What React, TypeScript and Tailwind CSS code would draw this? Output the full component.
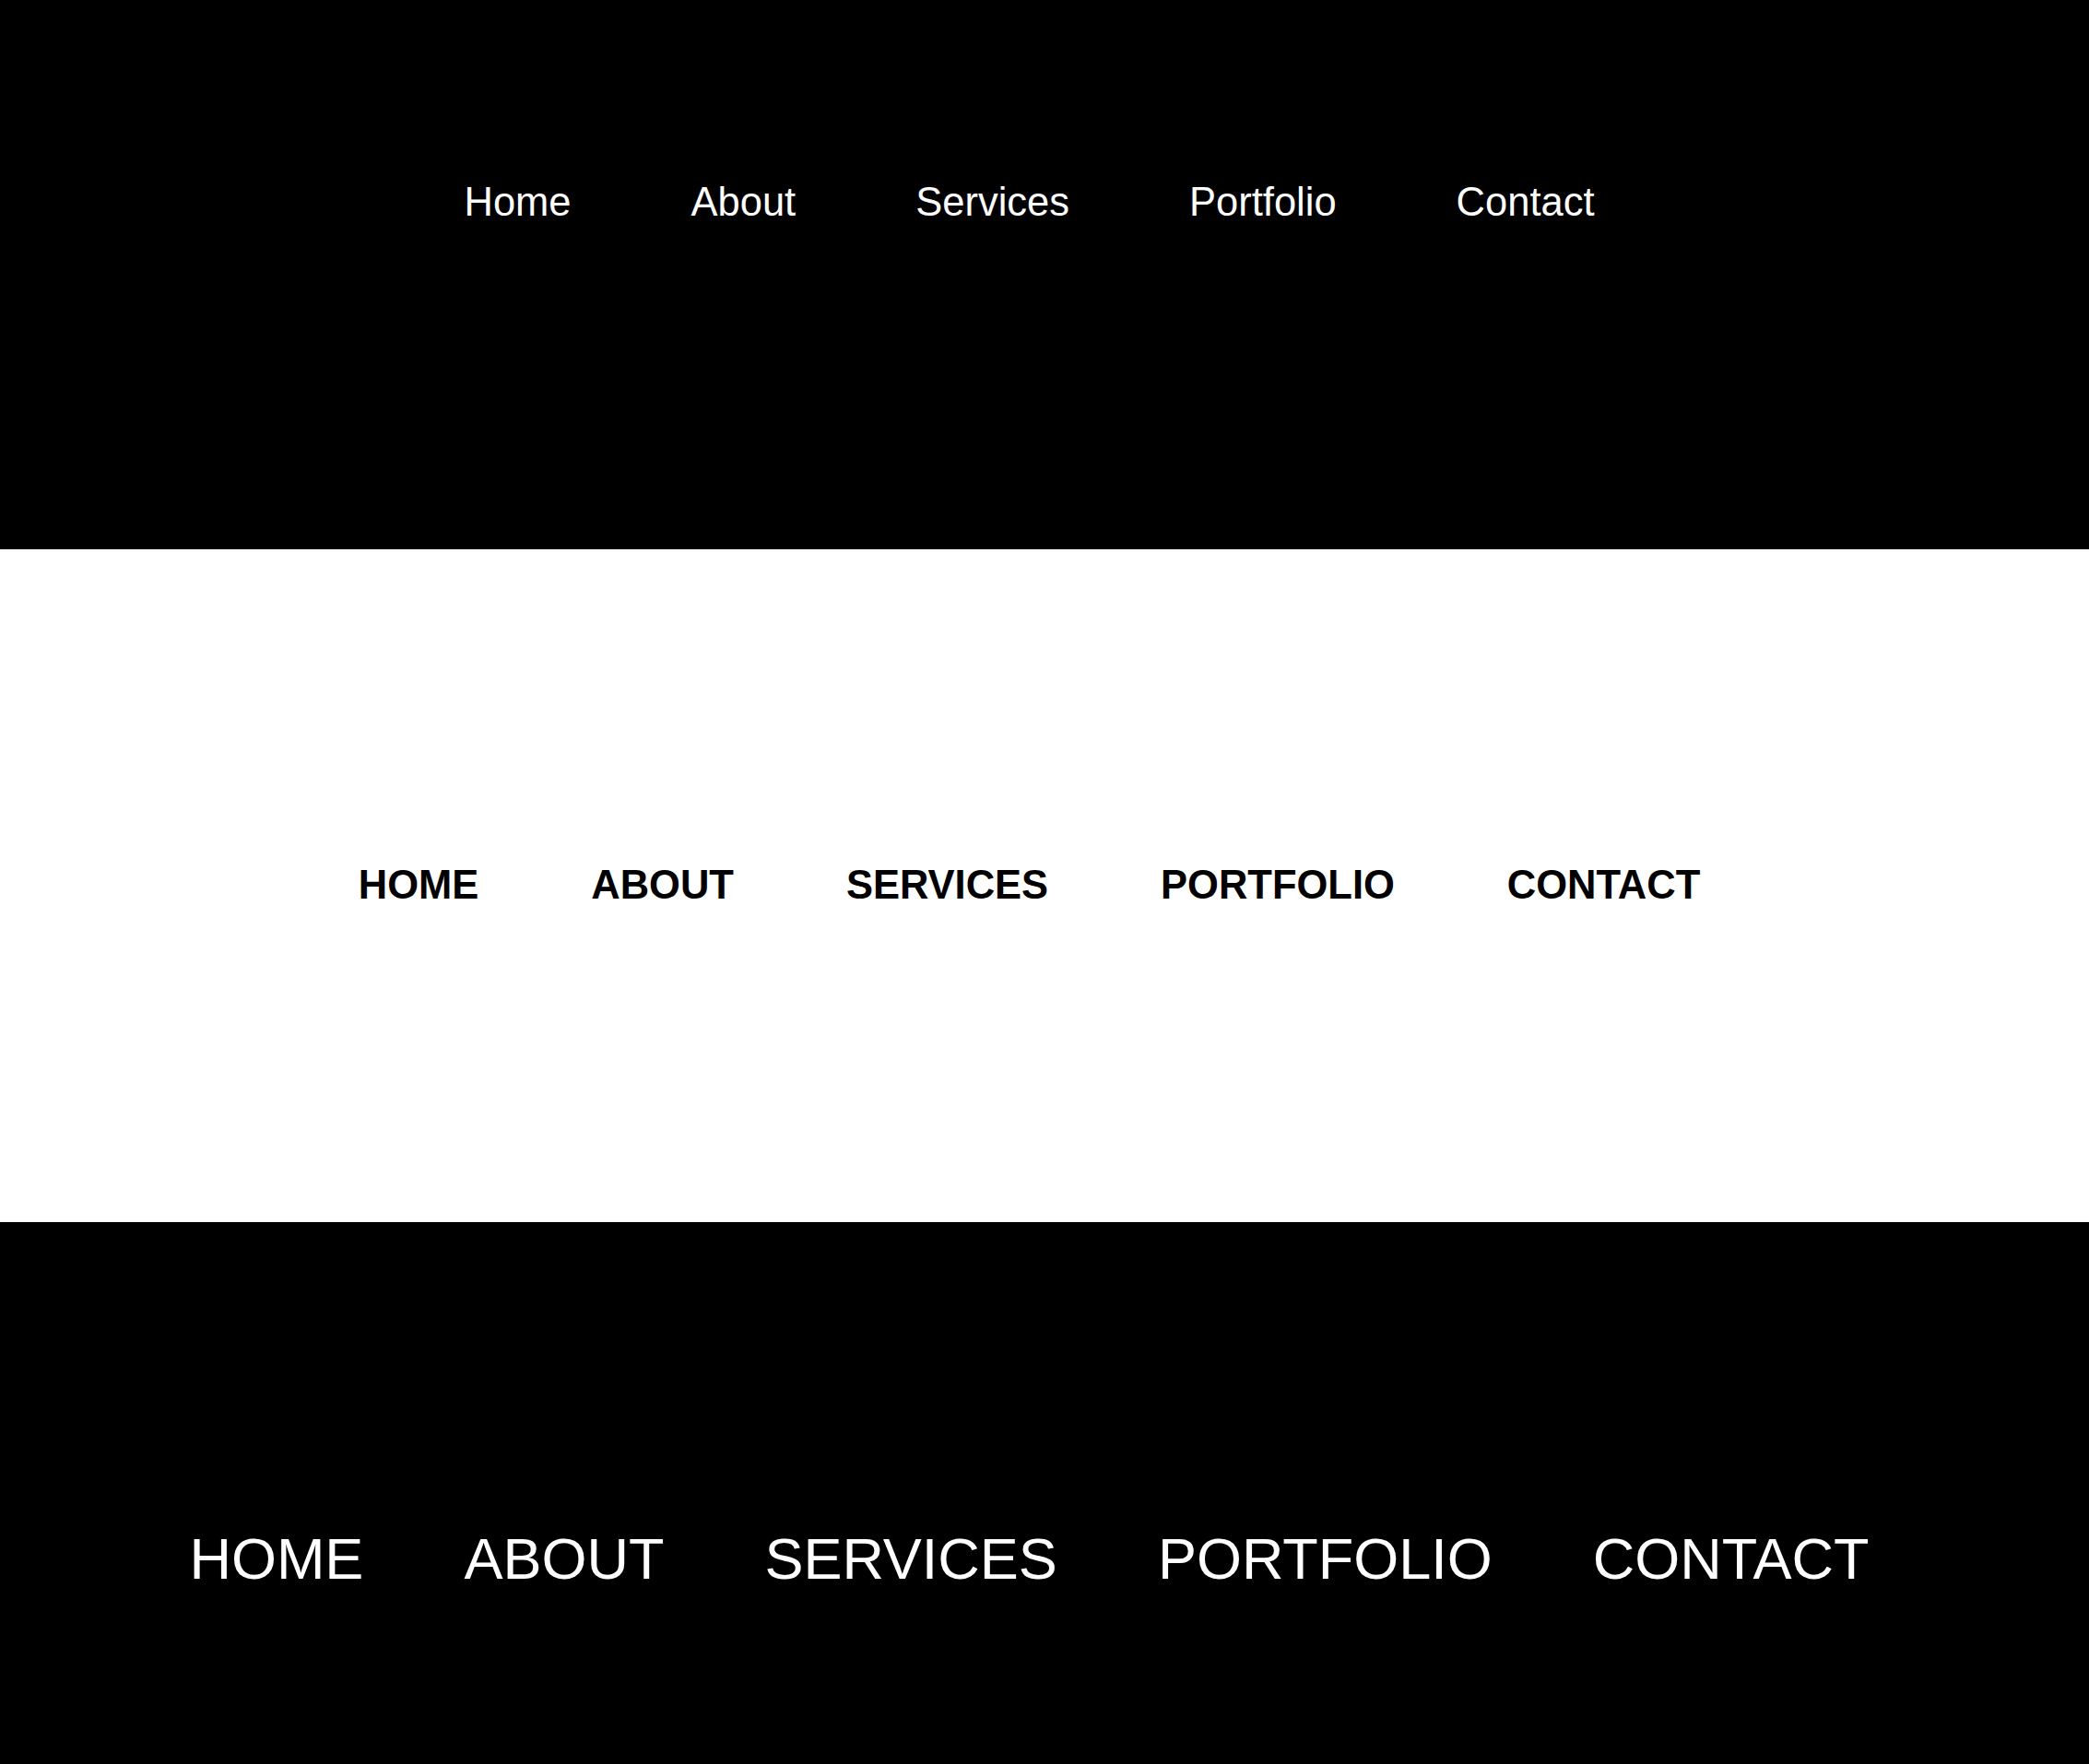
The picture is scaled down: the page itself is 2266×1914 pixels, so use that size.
const LINKS = ['Home', 'About', 'Services', 'Portfolio', 'Contact'];

const font = { fontFamily: '"Liberation Sans", Arial, Helvetica, sans-serif' };

export default function App() {
  return (
    <div className="w-[2266px] min-h-[1914px] bg-black" style={font}>
      {/* plain title-case nav on black */}
      <nav className="h-[596px] bg-black pt-[198px] pr-[33px]">
        <ul className="flex justify-center gap-[130px]">
          {LINKS.map((l) => (
            <li key={l}>
              <a href="#" className="text-[43.5px] leading-none text-white">{l}</a>
            </li>
          ))}
        </ul>
      </nav>

      {/* bold uppercase nav on white */}
      <nav className="h-[730px] bg-white flex items-center justify-center pr-[33px]">
        <ul className="flex gap-[122px]">
          {LINKS.map((l) => (
            <li key={l}>
              <a href="#" className="text-[43.5px] leading-none font-bold uppercase text-black">{l}</a>
            </li>
          ))}
        </ul>
      </nav>

      {/* large uppercase nav on black */}
      <nav className="h-[588px] bg-black pt-[334px] pr-[33px]">
        <ul className="flex justify-center gap-[109px]">
          {LINKS.map((l) => (
            <li key={l}>
              <a href="#" className="text-[63px] leading-none uppercase text-white">{l}</a>
            </li>
          ))}
        </ul>
      </nav>
    </div>
  );
}
